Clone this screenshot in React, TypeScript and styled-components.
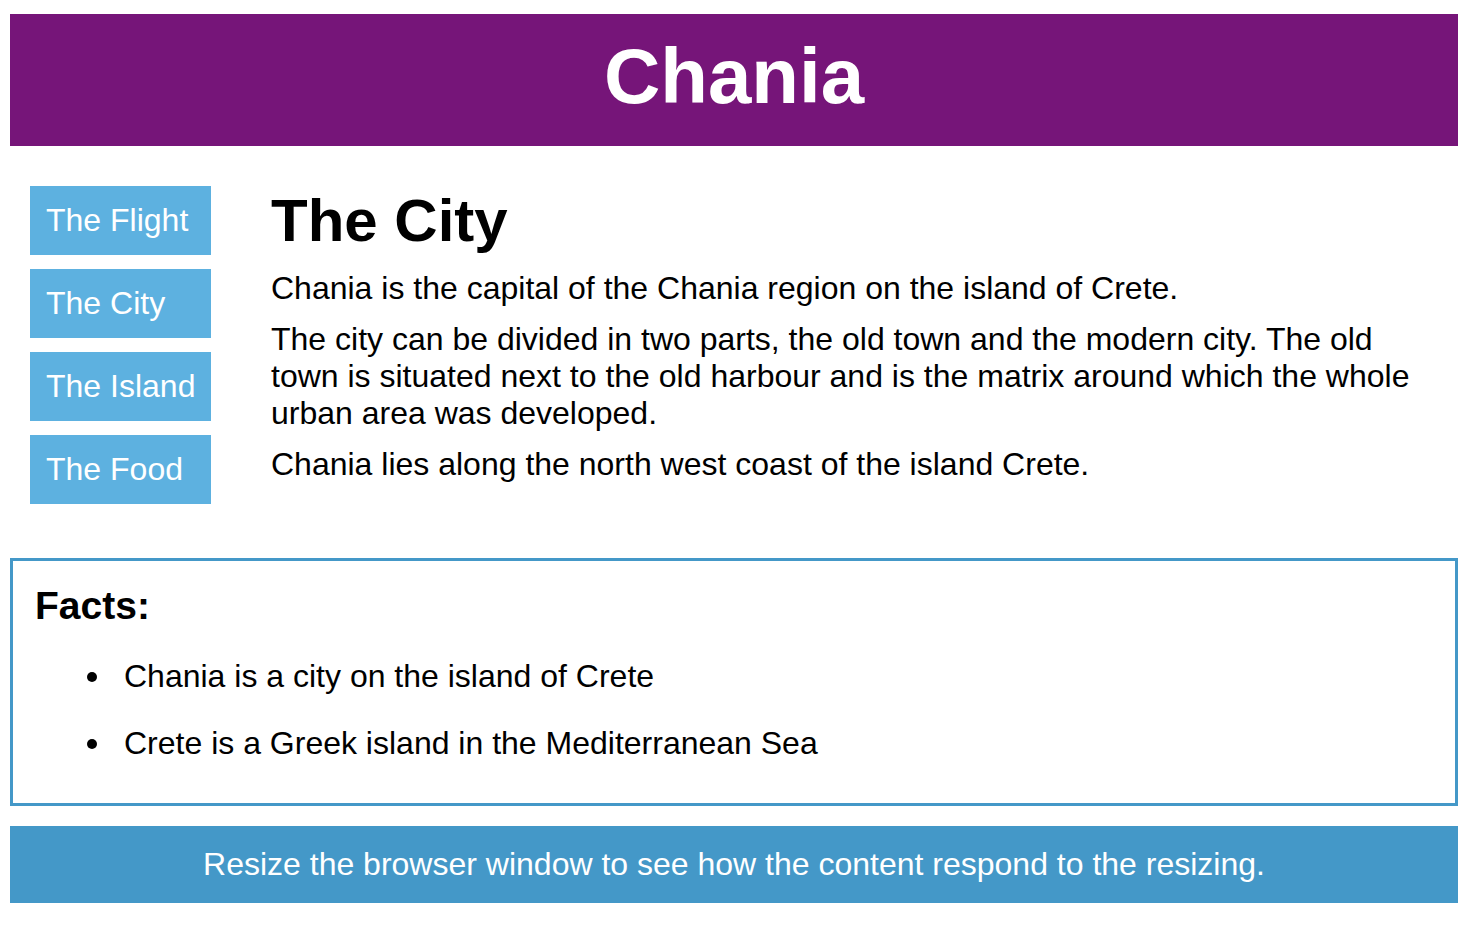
import React, { FC } from "react";
import styled, { createGlobalStyle } from "styled-components";

const GlobalStyle = createGlobalStyle`
  body {
    margin: 0;
    background: #fff;
    font-family: "Liberation Sans", Arial, Helvetica, sans-serif;
    color: #000;
  }
`;

const Page = styled.div`
  padding: 14px 16px 0 10px;
`;

const Header = styled.header`
  background-color: #761579;
  color: #fff;
  text-align: center;
  padding: 17px 0 25px;
`;

const Title = styled.h1`
  margin: 0;
  font-size: 78px;
  line-height: 90px;
  font-weight: bold;
`;

const Row = styled.div`
  display: flex;
  align-items: flex-start;
  padding: 40px 20px 0 20px;
`;

const Menu = styled.ul`
  list-style: none;
  margin: 0;
  padding: 0;
  width: 181px;
  flex-shrink: 0;
  display: flex;
  flex-direction: column;
  gap: 14px;
`;

const MenuItem = styled.li`
  background-color: #5db1e0;
  color: #fff;
  font-size: 32px;
  line-height: 37px;
  padding: 16px 17px 16px 16px;
  white-space: nowrap;
  overflow: hidden;
`;

const Main = styled.main`
  flex: 1;
  margin-left: 60px;
`;

const Heading = styled.h1`
  margin: 0 0 15px;
  font-size: 60px;
  line-height: 69px;
  font-weight: bold;
`;

const Para = styled.p`
  margin: 0 0 14px;
  font-size: 32px;
  line-height: 37px;
`;

const Facts = styled.section`
  margin-top: 54px;
  border: 3px solid #4498c8;
  padding: 23px 22px 42px;
`;

const FactsTitle = styled.h3`
  margin: 0;
  font-size: 39px;
  line-height: 43px;
  font-weight: bold;
`;

const FactList = styled.ul`
  list-style: none;
  margin: 31px 0 0;
  padding-left: 89px;
`;

const Fact = styled.li`
  position: relative;
  font-size: 32px;
  line-height: 36px;
  & + & {
    margin-top: 31px;
  }
  &::before {
    content: "";
    position: absolute;
    left: -37px;
    top: 14px;
    width: 10px;
    height: 10px;
    border-radius: 50%;
    background: #000;
  }
`;

const Footer = styled.footer`
  margin-top: 20px;
  background-color: #4498c8;
  color: #fff;
  text-align: center;
  font-size: 32px;
  line-height: 37px;
  padding: 20px 0;
`;

const menu = ["The Flight", "The City", "The Island", "The Food"];

const App: FC = () => {
  return (
    <>
      <GlobalStyle />
      <Page>
        <Header>
          <Title>Chania</Title>
        </Header>
        <Row>
          <Menu>
            {menu.map((item) => (
              <MenuItem key={item}>{item}</MenuItem>
            ))}
          </Menu>
          <Main>
            <Heading>The City</Heading>
            <Para>Chania is the capital of the Chania region on the island of Crete.</Para>
            <Para>
              The city can be divided in two parts, the old town and the modern city. The old
              town is situated next to the old harbour and is the matrix around which the whole
              urban area was developed.
            </Para>
            <Para>Chania lies along the north west coast of the island Crete.</Para>
          </Main>
        </Row>
        <Facts>
          <FactsTitle>Facts:</FactsTitle>
          <FactList>
            <Fact>Chania is a city on the island of Crete</Fact>
            <Fact>Crete is a Greek island in the Mediterranean Sea</Fact>
          </FactList>
        </Facts>
        <Footer>Resize the browser window to see how the content respond to the resizing.</Footer>
      </Page>
    </>
  );
};

export default App;
